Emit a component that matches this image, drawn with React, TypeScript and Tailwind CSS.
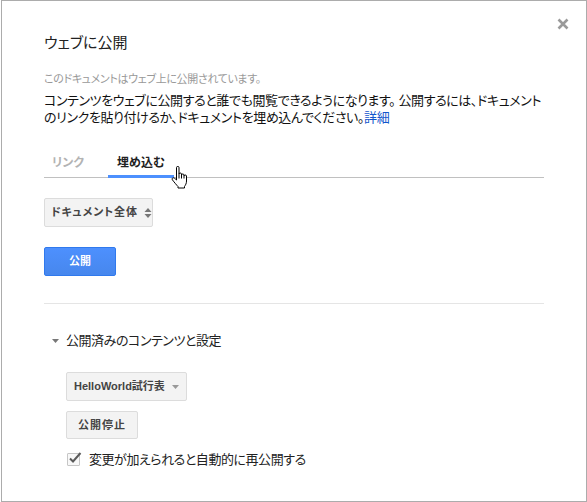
import React from 'react';

const font = "font-['Liberation_Sans','Noto_Sans_CJK_JP',sans-serif] [font-feature-settings:'palt']";

const CloseIcon = () => (
  <svg width="12" height="12" viewBox="0 0 12 12" className="absolute right-[17px] top-[17px]">
    <path d="M1.5 1.5 L10.5 10.5 M10.5 1.5 L1.5 10.5" stroke="#9a9a9a" strokeWidth="2.6" />
  </svg>
);

const HandCursor = () => (
  <svg width="18" height="23" viewBox="0 0 18 23" className="absolute left-[171px] top-[166px]">
    <path
      d="M5.5 1.5 C5.5 0.7 6 0.5 6.75 0.5 C7.5 0.5 8 0.7 8 1.5 V8 C8 7.3 8.5 7 9.2 7 C9.9 7 10.5 7.3 10.5 8 V9 C10.5 8.3 11 8 11.7 8 C12.4 8 13 8.3 13 9 V10 C13 9.3 13.5 9 14.2 9 C14.9 9 15.5 9.3 15.5 10 V15 C15.5 17.5 14.5 19 13.5 20.5 V22 H7 V20.5 C5.5 19 3.5 16.5 1.5 14 C0.8 13 1.2 12 2 11.8 C2.8 11.6 3.5 12 5.5 14 Z"
      fill="#fff"
      stroke="#000"
      strokeWidth="1"
    />
    <path d="M8 8 V12.5 M10.5 9 V12.5 M13 10 V12.5" stroke="#000" strokeWidth="1" />
  </svg>
);

const UpDown = () => (
  <svg width="8" height="12" viewBox="0 0 8 12" className="ml-[6px] shrink-0">
    <path d="M0.5 5 L4 1 L7.5 5 Z M0.5 7 L4 11 L7.5 7 Z" fill="#777" />
  </svg>
);

const Caret = ({ color = '#999' }: { color?: string }) => (
  <svg width="7" height="4" viewBox="0 0 7 4" className="shrink-0">
    <path d="M0 0 H7 L3.5 4 Z" fill={color} />
  </svg>
);

const Checkbox = () => (
  <span className="relative inline-block shrink-0 w-[13px] h-[13px] border border-[#c6c6c6] bg-[#f8f8f8] rounded-[1px]">
    <svg width="15" height="14" viewBox="0 0 15 14" className="absolute left-[0px] top-[-3px]">
      <path d="M2 7.5 L5 10.5 L12.5 2" fill="none" stroke="#5a5a5a" strokeWidth="2" />
    </svg>
  </span>
);

export default function App() {
  return (
    <div className={`relative w-[587px] h-[502px] bg-white ${font}`}>
      <div className="relative ml-[1px] w-[586px] h-[502px] border border-[#acacac] bg-white px-[42px] pt-[32px]">
        <CloseIcon />

        <h1 className="text-[15px] leading-[20px] text-[#222] font-normal">ウェブに公開</h1>

        <p className="mt-[18px] text-[11px] leading-[16px] text-[#999] tracking-[-0.35px]">
          このドキュメントはウェブ上に公開されています。
        </p>

        <p className="mt-[5px] text-[13px] leading-[17px] text-[#111] whitespace-nowrap tracking-[-0.4px]">
          コンテンツをウェブに公開すると誰でも閲覧できるようになります。 公開するには、ドキュメント
          <br />
          のリンクを貼り付けるか、ドキュメントを埋め込んでください。
          <span className="text-[#1155cc]">詳細</span>
        </p>

        <div className="mt-[29px] flex gap-[16px] border-b border-[#c0c0c0]">
          <div className="px-[8px] pb-[4px] mb-[-1px] border-b-[3px] border-transparent text-[12px] leading-[16px] font-bold text-[#b3b3b3]">
            リンク
          </div>
          <div className="px-[9px] pb-[4px] mb-[-1px] border-b-[3px] border-[#4d90fe] text-[12px] leading-[16px] font-bold text-[#222]">
            埋め込む
          </div>
        </div>

        <div className="mt-[20px] flex">
          <div className="flex items-center whitespace-nowrap h-[29px] w-[109px] pl-[6px] border border-[#dcdcdc] rounded-[2px] bg-[#f3f3f3] text-[11px] font-bold text-[#444] tracking-[0.8px]">
            ドキュメント全体
            <UpDown />
          </div>
        </div>

        <div className="mt-[20px] flex">
          <div className="flex items-center justify-center h-[29px] w-[72px] border border-[#3079ed] rounded-[2px] bg-gradient-to-b from-[#4d90fe] to-[#4787ed] text-[11px] font-bold text-white">
            公開
          </div>
        </div>

        <div className="mt-[27px] h-px bg-[#e5e5e5]" />

        <div className="mt-[28px] flex items-center text-[13px] leading-[17px] text-[#222] tracking-[-0.45px]">
          <span className="ml-[8px] mr-[7px] flex">
            <Caret color="#777" />
          </span>
          公開済みのコンテンツと設定
        </div>

        <div className="ml-[22px]">
          <div className="mt-[23px] flex">
            <div className="flex items-center whitespace-nowrap h-[29px] w-[121px] pl-[7px] gap-[7px] border border-[#dcdcdc] rounded-[2px] bg-[#f3f3f3] text-[11px] font-bold text-[#444]">
              HelloWorld試行表
              <Caret />
            </div>
          </div>

          <div className="mt-[10px] flex">
            <div className="flex items-center justify-center h-[28px] w-[72px] border border-[#dcdcdc] rounded-[2px] bg-[#f3f3f3] text-[11px] font-bold text-[#444] tracking-[1px]">
              公開停止
            </div>
          </div>

          <div className="mt-[12px] flex items-center h-[17px] pl-[1px] text-[13px] text-[#222] tracking-[-0.45px]">
            <Checkbox />
            <span className="ml-[9px]">変更が加えられると自動的に再公開する</span>
          </div>
        </div>
      </div>
      <HandCursor />
    </div>
  );
}
